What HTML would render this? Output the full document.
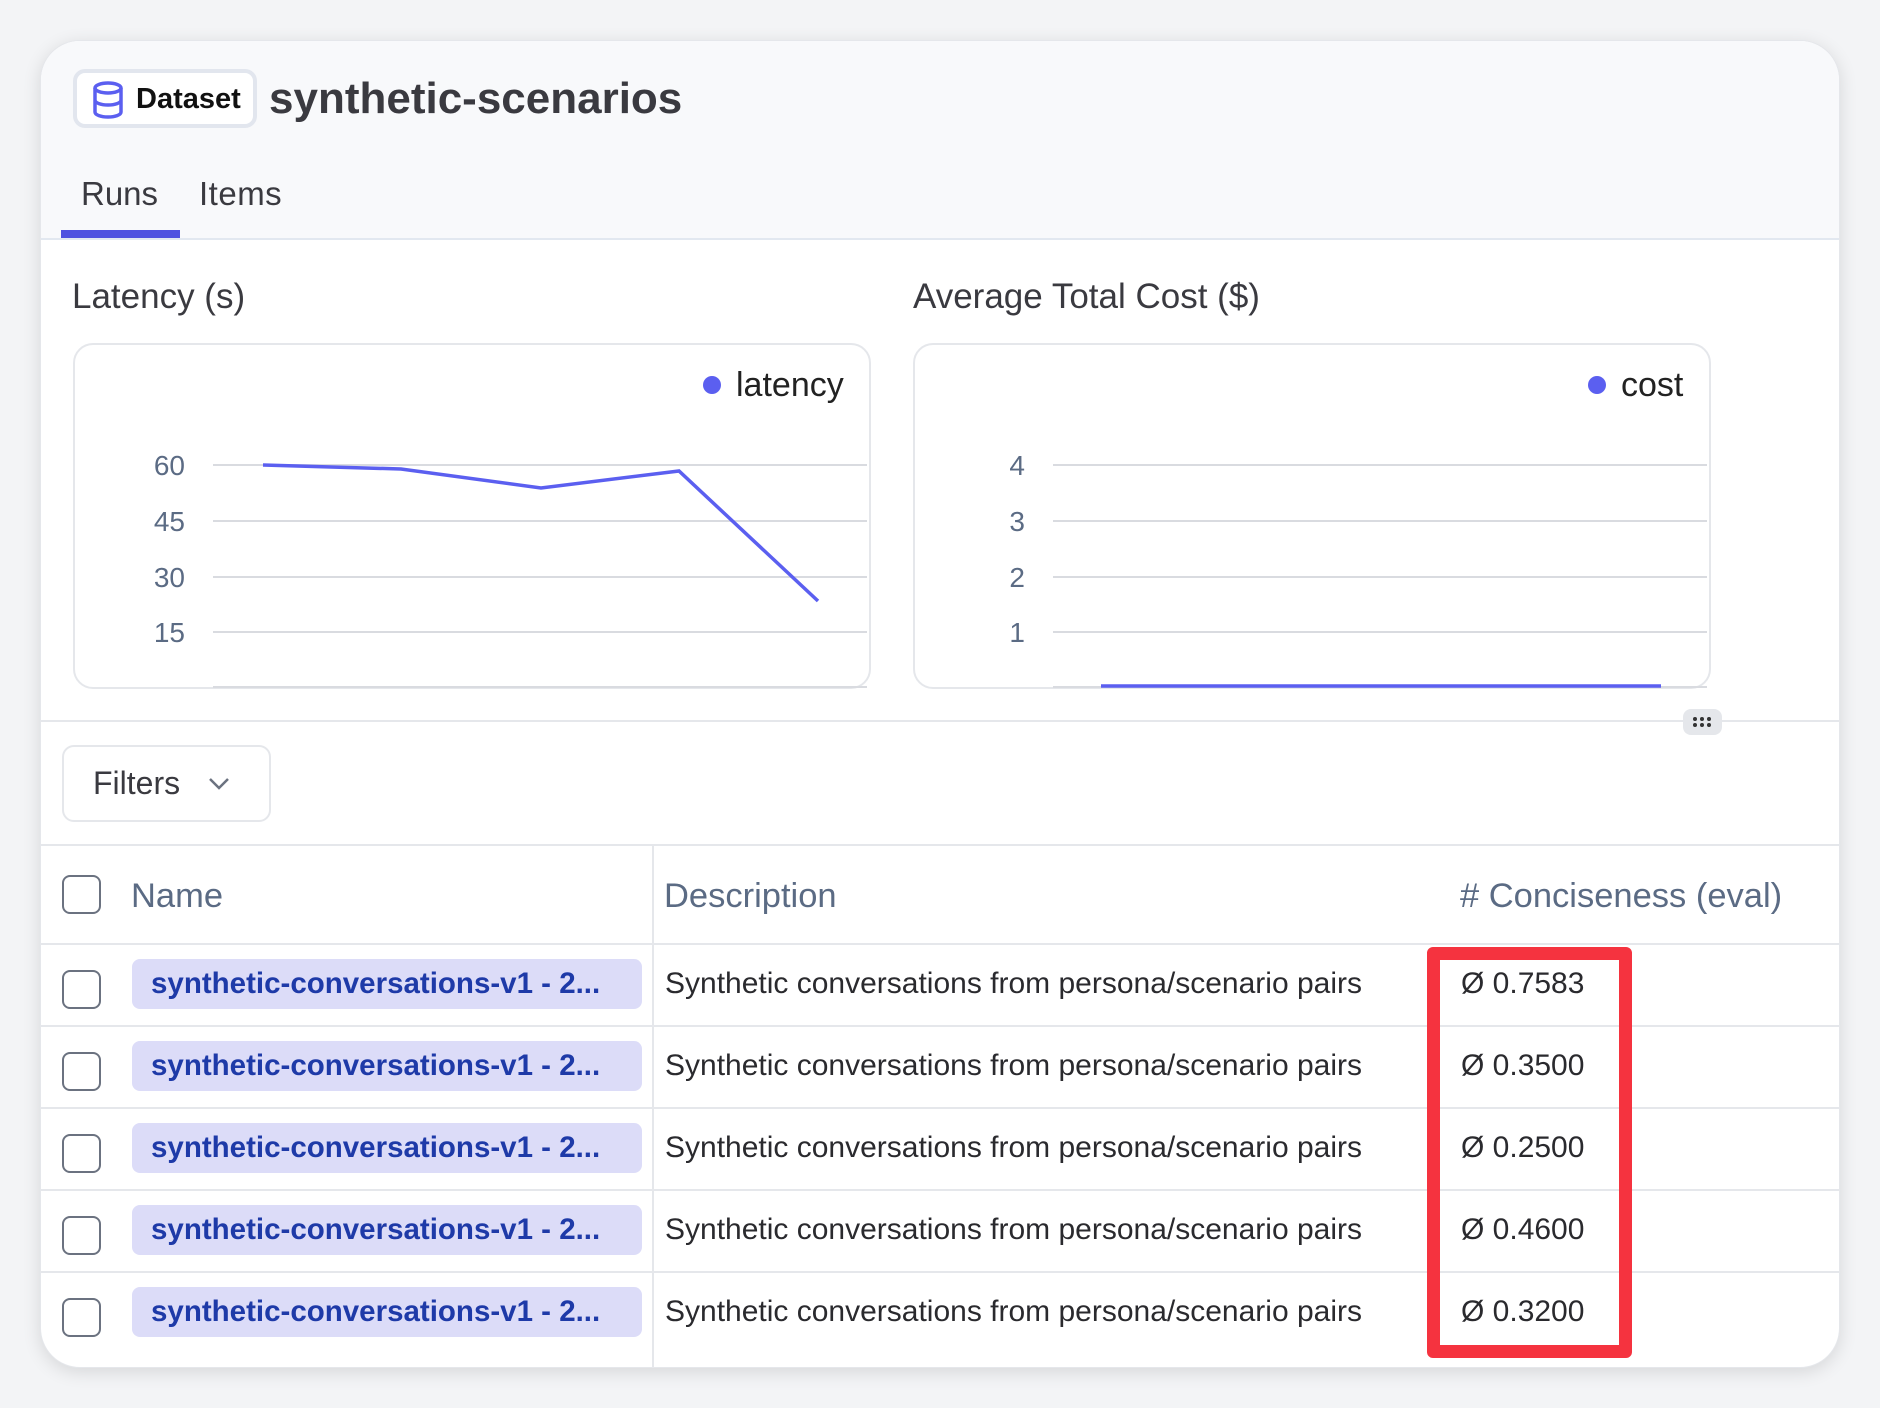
<!DOCTYPE html>
<html><head><meta charset="utf-8"><style>
*{box-sizing:border-box;margin:0;padding:0}
body{width:1880px;height:1408px;background:#f3f4f6;font-family:"Liberation Sans",sans-serif;position:relative;overflow:hidden}
.card{position:absolute;left:40px;top:40px;width:1800px;height:1328px;background:#fff;border-radius:40px;box-shadow:0 4px 18px rgba(0,0,0,.12);overflow:hidden;border:1px solid #e5e7eb}
.a{position:absolute}
.hdr{left:0;top:0;width:1800px;height:199px;background:#f8f9fb;border-bottom:2px solid #e2e8f0}
.t{position:absolute;white-space:nowrap;line-height:1}
.cb{position:absolute;width:39px;height:39px;border:2px solid #6b7280;border-radius:8px;background:#fff}
.badge{position:absolute;left:91px;width:510px;height:50px;background:#dcdcf8;border-radius:8px;color:#1e3aa8;font-weight:bold;font-size:29.5px;line-height:50px;padding-left:19px}
.desc{position:absolute;left:624px;font-size:30px;color:#2a2a2e}
.val{position:absolute;left:1420px;font-size:30px;color:#2a2a2e}
.hl{position:absolute;left:0;width:1800px;height:2px;background:#e5e7eb}
.th{position:absolute;white-space:nowrap;line-height:1;top:838px;color:#5b6b84;font-size:34.5px}
</style></head><body>
<div class="card">
 <div class="a hdr"></div>
 <div class="a" style="left:32px;top:28px;width:184px;height:59px;border:4px solid #e2e6ee;border-radius:12px;background:#fff"></div>
 <svg class="a" style="left:50px;top:40px" width="34" height="38" viewBox="0 0 34 38"><g fill="none" stroke="#5b5ff0" stroke-width="3.5"><ellipse cx="17" cy="7" rx="13" ry="5"/><path d="M4 7v24c0 3 6 5 13 5s13-2 13-5V7M4 19c0 3 6 5 13 5s13-2 13-5"/></g></svg>
 <div class="t" style="left:95px;top:44px;font-size:29px;font-weight:bold;color:#111">Dataset</div>
 <div class="t" style="left:228px;top:36px;font-size:44px;font-weight:bold;color:#3a3a40">synthetic-scenarios</div>
 <div class="t" style="left:40px;top:136px;font-size:33px;color:#3a3a40">Runs</div>
 <div class="t" style="left:158px;top:136px;font-size:33px;color:#3a3a40;letter-spacing:0.5px">Items</div>
 <div class="a" style="left:20px;top:189px;width:119px;height:8px;background:#4f52e0"></div>

 <div class="t" style="left:31px;top:238px;font-size:35px;color:#3a3a40">Latency (s)</div>
 <div class="t" style="left:872px;top:238px;font-size:35px;color:#3a3a40">Average Total Cost ($)</div>

 <div class="a" style="left:32px;top:302px;width:798px;height:346px;border:2px solid #e5e7eb;border-radius:20px"></div>
 <div class="a" style="left:872px;top:302px;width:798px;height:346px;border:2px solid #e5e7eb;border-radius:20px"></div>
 <svg class="a" style="left:0;top:0" width="1800" height="700">
  <g stroke="#d9dbe0" stroke-width="2">
   <line x1="172" y1="424" x2="826" y2="424"/><line x1="172" y1="480" x2="826" y2="480"/><line x1="172" y1="536" x2="826" y2="536"/><line x1="172" y1="591" x2="826" y2="591"/><line x1="172" y1="646" x2="826" y2="646"/>
   <line x1="1012" y1="424" x2="1666" y2="424"/><line x1="1012" y1="480" x2="1666" y2="480"/><line x1="1012" y1="536" x2="1666" y2="536"/><line x1="1012" y1="591" x2="1666" y2="591"/><line x1="1012" y1="646" x2="1666" y2="646"/>
  </g>
  <polyline points="222,424 360,428 500,447 638,430 777,560" fill="none" stroke="#5b5ff0" stroke-width="3.5"/>
  <line x1="1060" y1="645" x2="1620" y2="645" stroke="#5b5ff0" stroke-width="3.5"/>
  <circle cx="671" cy="344" r="9" fill="#5b5ff0"/><circle cx="1556" cy="344" r="9" fill="#5b5ff0"/>
  <g font-family="Liberation Sans" font-size="28" fill="#5b6b84" text-anchor="end">
   <text x="144" y="434">60</text><text x="144" y="490">45</text><text x="144" y="546">30</text><text x="144" y="601">15</text>
   <text x="984" y="434">4</text><text x="984" y="490">3</text><text x="984" y="546">2</text><text x="984" y="601">1</text>
  </g>
 </svg>
 <div class="t" style="left:695px;top:327px;font-size:34px;color:#222">latency</div>
 <div class="t" style="left:1580px;top:327px;font-size:34px;color:#222">cost</div>

 <div class="hl" style="top:679px"></div>
 <div class="a" style="left:1642px;top:668px;width:39px;height:26px;background:#e5e7eb;border-radius:8px"></div>
 <svg class="a" style="left:1650px;top:674px" width="24" height="14"><g fill="#333"><circle cx="4" cy="4" r="2"/><circle cx="11" cy="4" r="2"/><circle cx="18" cy="4" r="2"/><circle cx="4" cy="10" r="2"/><circle cx="11" cy="10" r="2"/><circle cx="18" cy="10" r="2"/></g></svg>

 <div class="a" style="left:21px;top:704px;width:209px;height:77px;border:2px solid #e5e7eb;border-radius:12px"></div>
 <div class="t" style="left:52px;top:726px;font-size:32px;color:#3a3a40">Filters</div>
 <svg class="a" style="left:166px;top:734px" width="24" height="16"><path d="M3 4l9 9 9-9" fill="none" stroke="#6b7280" stroke-width="2.5"/></svg>

 <div class="hl" style="top:803px"></div>
 <div class="a" style="left:611px;top:803px;width:2px;height:550px;background:#e5e7eb"></div>
 <div class="cb" style="left:21px;top:834px"></div>
 <div class="th" style="left:90px">Name</div>
 <div class="th" style="left:623px">Description</div>
 <div class="th" style="left:1419px"># Conciseness (eval)</div>

 <div class="hl" style="top:902px"></div>
 <div class="hl" style="top:984px"></div>
 <div class="hl" style="top:1066px"></div>
 <div class="hl" style="top:1148px"></div>
 <div class="hl" style="top:1230px"></div>

 <div class="cb" style="left:21px;top:929px"></div><div class="badge" style="top:918px">synthetic-conversations-v1 - 2...</div><div class="t desc" style="top:928px">Synthetic conversations from persona/scenario pairs</div><div class="t val" style="top:928px">Ø 0.7583</div>
 <div class="cb" style="left:21px;top:1011px"></div><div class="badge" style="top:1000px">synthetic-conversations-v1 - 2...</div><div class="t desc" style="top:1010px">Synthetic conversations from persona/scenario pairs</div><div class="t val" style="top:1010px">Ø 0.3500</div>
 <div class="cb" style="left:21px;top:1093px"></div><div class="badge" style="top:1082px">synthetic-conversations-v1 - 2...</div><div class="t desc" style="top:1092px">Synthetic conversations from persona/scenario pairs</div><div class="t val" style="top:1092px">Ø 0.2500</div>
 <div class="cb" style="left:21px;top:1175px"></div><div class="badge" style="top:1164px">synthetic-conversations-v1 - 2...</div><div class="t desc" style="top:1174px">Synthetic conversations from persona/scenario pairs</div><div class="t val" style="top:1174px">Ø 0.4600</div>
 <div class="cb" style="left:21px;top:1257px"></div><div class="badge" style="top:1246px">synthetic-conversations-v1 - 2...</div><div class="t desc" style="top:1256px">Synthetic conversations from persona/scenario pairs</div><div class="t val" style="top:1256px">Ø 0.3200</div>

 <div class="a" style="left:1386px;top:906px;width:205px;height:411px;border:13px solid #f5333f;border-radius:6px"></div>
</div>
</body></html>
